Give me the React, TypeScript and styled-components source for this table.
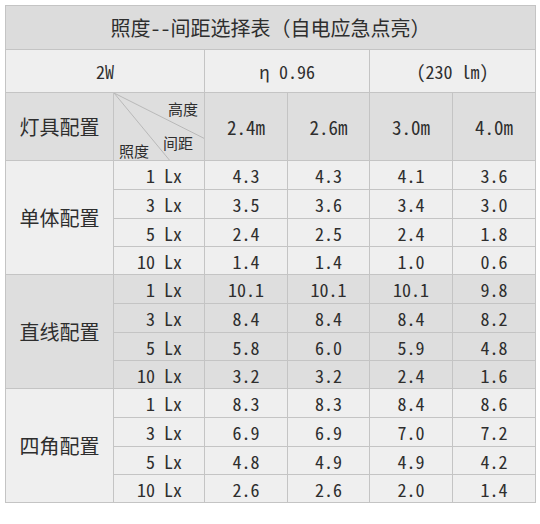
import styled, { createGlobalStyle } from 'styled-components';

const GlobalStyle = createGlobalStyle`
  body {
    margin: 0;
    background: #ffffff;
  }
`;

const heights = ['2.4m', '2.6m', '3.0m', '4.0m'];

const groups = [
  {
    name: '单体配置',
    light: true,
    rows: [
      ['1 Lx', '4.3', '4.3', '4.1', '3.6'],
      ['3 Lx', '3.5', '3.6', '3.4', '3.0'],
      ['5 Lx', '2.4', '2.5', '2.4', '1.8'],
      ['10 Lx', '1.4', '1.4', '1.0', '0.6'],
    ],
  },
  {
    name: '直线配置',
    light: false,
    rows: [
      ['1 Lx', '10.1', '10.1', '10.1', '9.8'],
      ['3 Lx', '8.4', '8.4', '8.4', '8.2'],
      ['5 Lx', '5.8', '6.0', '5.9', '4.8'],
      ['10 Lx', '3.2', '3.2', '2.4', '1.6'],
    ],
  },
  {
    name: '四角配置',
    light: true,
    rows: [
      ['1 Lx', '8.3', '8.3', '8.4', '8.6'],
      ['3 Lx', '6.9', '6.9', '7.0', '7.2'],
      ['5 Lx', '4.8', '4.9', '4.9', '4.2'],
      ['10 Lx', '2.6', '2.6', '2.0', '1.4'],
    ],
  },
];

const rowHeights = [29, 29, 28, 28];

export default function App() {
  return (
    <Page>
      <GlobalStyle />
      <Table>
        <colgroup>
          <col style={{ width: 108 }} />
          <col style={{ width: 91 }} />
          <col style={{ width: 83 }} />
          <col style={{ width: 82 }} />
          <col style={{ width: 83 }} />
          <col style={{ width: 83 }} />
        </colgroup>
        <tbody>
          <tr>
            <TitleCell colSpan={6} $h={44}>
              照度--间距选择表（自电应急点亮）
            </TitleCell>
          </tr>
          <tr>
            <SpecCell colSpan={2} $h={43}>2W</SpecCell>
            <SpecCell colSpan={2} $h={43}>η 0.96</SpecCell>
            <SpecCell colSpan={2} $h={43}>(230 lm)</SpecCell>
          </tr>
          <tr>
            <NameCell $h={68} $light={false}>灯具配置</NameCell>
            <DiagCell>
              <DiagLines viewBox="0 0 91 68" preserveAspectRatio="none">
                <line x1="0" y1="0" x2="91" y2="46" />
                <line x1="0" y1="0" x2="56" y2="68" />
              </DiagLines>
              <DiagBox>
                <TopLabel>高度</TopLabel>
                <BottomRow>
                  <LowLabel>照度</LowLabel>
                  <MidLabel>间距</MidLabel>
                </BottomRow>
              </DiagBox>
            </DiagCell>
            {heights.map((h) => (
              <HeadNum key={h} $h={68}>{h}</HeadNum>
            ))}
          </tr>
          {groups.map((g) =>
            g.rows.map((r, i) => (
              <tr key={g.name + r[0]}>
                {i === 0 && (
                  <NameCell rowSpan={4} $light={g.light}>
                    {g.name}
                  </NameCell>
                )}
                <LuxCell $h={rowHeights[i]} $light={g.light}>{r[0]}</LuxCell>
                {r.slice(1).map((v, j) => (
                  <ValueCell key={j} $h={rowHeights[i]} $light={g.light}>
                    {v}
                  </ValueCell>
                ))}
              </tr>
            ))
          )}
        </tbody>
      </Table>
    </Page>
  );
}

const Page = styled.div`
  padding: 5px 0 0 5px;
  font-family: 'Noto Sans Mono CJK SC', 'Noto Sans CJK SC', 'DejaVu Sans Mono', monospace;
  color: #2e2e2e;
`;

const Table = styled.table`
  width: 530px;
  table-layout: fixed;
  border-collapse: collapse;
  border: 1px solid #bdbdbd;
`;

const Cell = styled.td<{ $h?: number; $light?: boolean }>`
  height: ${(p) => (p.$h ? `${p.$h - 1}px` : 'auto')};
  padding: 0;
  border: 1px solid #c4c4c4;
  background-color: ${(p) => (p.$light ? '#efefef' : '#dedede')};
  text-align: center;
  vertical-align: middle;
  line-height: 1;
  font-size: 18px;
`;

const TitleCell = styled(Cell)`
  background-color: #dcdcdc;
  font-size: 20px;
`;

const SpecCell = styled(Cell)`
  background-color: #efefef;
  font-size: 18px;
`;

const NameCell = styled(Cell)`
  font-size: 20px;
`;

const HeadNum = styled(Cell)`
  font-size: 19px;
`;

const LuxCell = styled(Cell)`
  text-align: right;
  padding-right: 22px;
  word-spacing: 0;
`;

const ValueCell = styled(Cell)`
  font-size: 18px;
`;

const DiagCell = styled(Cell)`
  position: relative;
  height: 67px;
  background-color: #dedede;
`;

const DiagLines = styled.svg`
  position: absolute;
  inset: 0;
  width: 100%;
  height: 100%;

  line {
    stroke: #b8b8b8;
    stroke-width: 1;
  }
`;

const DiagBox = styled.div`
  position: relative;
  height: 67px;
  display: flex;
  flex-direction: column;
  justify-content: space-between;
  padding: 8px 6px 2px 5px;
  box-sizing: border-box;
  font-size: 15px;
`;

const TopLabel = styled.span`
  align-self: flex-end;
`;

const BottomRow = styled.div`
  display: flex;
  justify-content: space-between;
  align-items: flex-end;
`;

const LowLabel = styled.span``;

const MidLabel = styled.span`
  margin-bottom: 8px;
  margin-right: 5px;
`;
